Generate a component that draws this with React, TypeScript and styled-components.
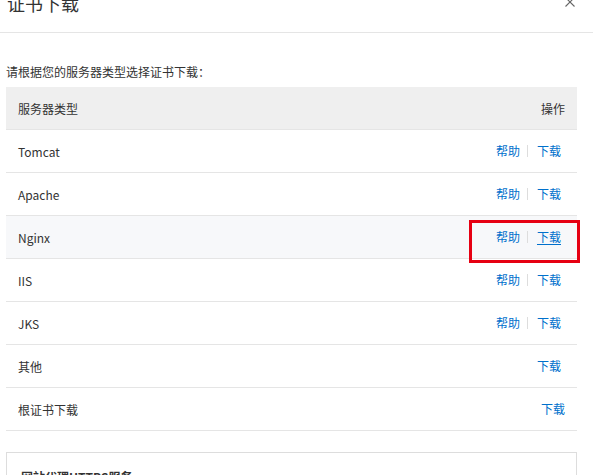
import React from 'react';
import styled, { createGlobalStyle } from 'styled-components';

const GlobalStyle = createGlobalStyle`
    html, body {
        margin: 0;
        padding: 0;
        background: #fff;
    }
    body {
        font-family: "Noto Sans CJK SC", "Microsoft YaHei", sans-serif;
        font-size: 12px;
        color: #333;
        overflow: hidden;
    }
`;

type Server = {
    name: string;
    help: boolean;
    active?: boolean;
    padRight: number;
};

const servers: Server[] = [
    { name: 'Tomcat', help: true, padRight: 16 },
    { name: 'Apache', help: true, padRight: 16 },
    { name: 'Nginx', help: true, active: true, padRight: 16 },
    { name: 'IIS', help: true, padRight: 16 },
    { name: 'JKS', help: true, padRight: 16 },
    { name: '其他', help: false, padRight: 16 },
    { name: '根证书下载', help: false, padRight: 12 },
];

const App = () => {
    return (
        <>
            <GlobalStyle />
            <Modal>
                <Header>
                    <Title>证书下载</Title>
                    <CloseIcon viewBox="0 0 10 10" aria-label="关闭">
                        <path d="M0.5 0.5 L9.5 9.5 M9.5 0.5 L0.5 9.5" />
                    </CloseIcon>
                </Header>

                <Intro>请根据您的服务器类型选择证书下载：</Intro>

                <Table>
                    <HeadRow>
                        <span>服务器类型</span>
                        <span>操作</span>
                    </HeadRow>
                    {servers.map((s) => (
                        <Row key={s.name} $active={s.active}>
                            <span>{s.name}</span>
                            <Actions $padRight={s.padRight}>
                                {s.help && (
                                    <>
                                        <ActionLink href="#">帮助</ActionLink>
                                        <Divider />
                                    </>
                                )}
                                <ActionLink href="#" $underline={s.active}>
                                    下载
                                </ActionLink>
                            </Actions>
                            {s.active && <Highlight />}
                        </Row>
                    ))}
                </Table>

                <ProxyBox>
                    <ProxyTitle>网站代理HTTPS服务</ProxyTitle>
                </ProxyBox>
            </Modal>
        </>
    );
};

export default App;

const Modal = styled.div`
    width: 593px;
    height: 475px;
    overflow: hidden;
    background: #fff;
`;

const Header = styled.div`
    display: flex;
    justify-content: space-between;
    align-items: flex-start;
    height: 32px;
    padding-left: 7px;
    border-bottom: 1px solid #e5e5e5;
    overflow: hidden;
`;

const Title = styled.div`
    margin-top: -6px;
    font-size: 18px;
    line-height: 18px;
    color: #333;
`;

const CloseIcon = styled.svg`
    width: 10px;
    height: 10px;
    margin-top: -3px;
    margin-right: 18px;
    stroke: #666;
    stroke-width: 1.1;
    fill: none;
`;

const Intro = styled.div`
    margin: 30px 0 6px 6px;
    line-height: 18px;
    color: #333;
`;

const Table = styled.div`
    margin: 0 16px 0 6px;
    display: flex;
    flex-direction: column;
`;

const HeadRow = styled.div`
    display: flex;
    justify-content: space-between;
    align-items: center;
    height: 42px;
    padding: 0 12px;
    background: #efefef;
    border-bottom: 1px solid #e5e5e5;
`;

const Row = styled.div<{ $active?: boolean }>`
    position: relative;
    display: flex;
    justify-content: space-between;
    align-items: center;
    height: 42px;
    padding-left: 12px;
    border-bottom: 1px solid #e5e5e5;
    background: ${(p) => (p.$active ? '#f7f8fa' : '#fff')};
`;

const Actions = styled.div<{ $padRight: number }>`
    display: flex;
    align-items: center;
    padding-right: ${(p) => p.$padRight}px;
`;

const ActionLink = styled.a<{ $underline?: boolean }>`
    color: #0070cc;
    text-decoration: ${(p) => (p.$underline ? 'underline' : 'none')};
    text-underline-offset: 2px;
    line-height: 18px;
`;

const Divider = styled.span`
    display: inline-block;
    width: 1px;
    height: 12px;
    margin: 0 9px 0 7px;
    background: #dddddd;
`;

const Highlight = styled.div`
    position: absolute;
    z-index: 2;
    top: 4px;
    right: -3px;
    width: 105px;
    height: 37px;
    border: 3px solid #e60012;
    pointer-events: none;
`;

const ProxyBox = styled.div`
    margin: 21px 16px 0 6px;
    border: 1px solid #dddddd;
    padding: 15px 14px;
`;

const ProxyTitle = styled.div`
    font-size: 12px;
    font-weight: 700;
    color: #333;
    line-height: 18px;
`;
